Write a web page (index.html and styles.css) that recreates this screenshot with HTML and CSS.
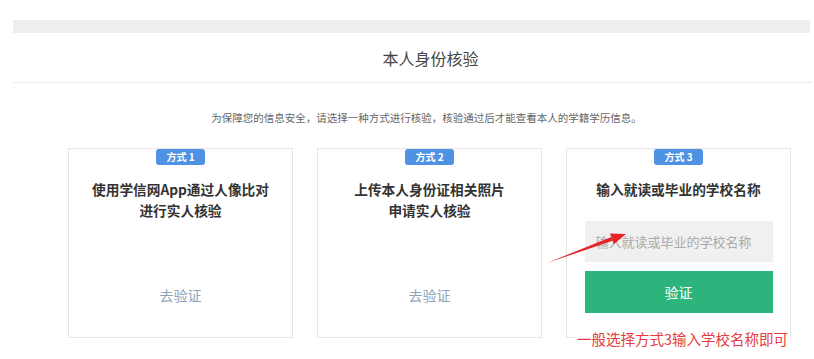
FILE: index.html
```html
<!DOCTYPE html>
<html lang="zh-CN">
<head>
    <meta charset="UTF-8">
    <meta name="viewport" content="width=device-width, initial-scale=1.0">
    <title>本人身份核验</title>
    <link rel="stylesheet" href="styles.css">
</head>
<body>
    <div class="page">
        <div class="top-strip"></div>
        <div class="header">
            <h1 class="header-title">本人身份核验</h1>
        </div>
        <div class="content">
            <p class="tip">为保障您的信息安全，请选择一种方式进行核验，核验通过后才能查看本人的学籍学历信息。</p>
            <div class="cards">
                <div class="card">
                    <span class="badge">方式 1</span>
                    <div class="card-title">使用学信网App通过人像比对<br>进行实人核验</div>
                    <a class="card-link" href="#">去验证</a>
                </div>
                <div class="card">
                    <span class="badge">方式 2</span>
                    <div class="card-title">上传本人身份证相关照片<br>申请实人核验</div>
                    <a class="card-link" href="#">去验证</a>
                </div>
                <div class="card card-school">
                    <span class="badge">方式 3</span>
                    <div class="card-title">输入就读或毕业的学校名称</div>
                    <input class="school-input" type="text" placeholder="输入就读或毕业的学校名称">
                    <button class="verify-btn" type="button">验证</button>
                    <!-- annotation on the screenshot -->
                    <span class="note">一般选择方式3输入学校名称即可</span>
                </div>
            </div>
        </div>
        <svg class="arrow" width="814" height="359" viewBox="0 0 814 359">
            <polygon points="547,263 612.6,240.8 611.2,237.0" fill="#e4262b"/>
            <polygon points="626,234 613.8,244.2 610.0,233.6" fill="#e4262b"/>
        </svg>
    </div>
</body>
</html>
```

FILE: styles.css
```css
body {
    margin: 0;
    background-color: #fff;
    font-family: "Noto Sans CJK SC", "Noto Sans", sans-serif;
    color: #333;
}

.page {
    position: relative;
    width: 814px;
    height: 359px;
    overflow: hidden;
}

.top-strip {
    margin: 20px 4px 0 13px;
    height: 13px;
    background-color: #eeeeee;
}

.header {
    margin-left: 13px;
    margin-right: 2px;
    height: 49px;
    border-bottom: 1px solid #ececec;
    display: flex;
    align-items: center;
    justify-content: center;
    padding-left: 36px;
}

.header-title {
    margin: 0;
    font-size: 16px;
    font-weight: 400;
    color: #444;
    line-height: 20px;
}

.content {
    margin-left: 49px;
    width: 761px;
}

.tip {
    margin: 27px 0 0;
    text-align: center;
    font-size: 10.5px;
    line-height: 16px;
    color: #666;
    padding-right: 6px;
}

.cards {
    display: flex;
    justify-content: center;
    gap: 24px;
    margin-top: 22px;
}

.card {
    position: relative;
    width: 225px;
    height: 190px;
    box-sizing: border-box;
    border: 1px solid #e6e6e6;
    display: flex;
    flex-direction: column;
    align-items: center;
    padding-bottom: 32px;
}

.badge {
    display: inline-block;
    width: 49px;
    height: 16px;
    line-height: 16px;
    text-align: center;
    background-color: #4f92e3;
    color: #fff;
    font-size: 10px;
    font-weight: 700;
    border-radius: 3px;
}

.card-title {
    margin-top: 14px;
    font-size: 13.7px;
    font-weight: 700;
    line-height: 21px;
    text-align: center;
    color: #333;
}

.card-link {
    margin-top: auto;
    font-size: 14px;
    line-height: 20px;
    color: #8da2b8;
    text-decoration: none;
}

.card-school {
    padding: 0 18px 0 18px;
}

.school-input {
    margin-top: 21px;
    width: 188px;
    height: 41px;
    box-sizing: border-box;
    border: none;
    background-color: #f0f0f0;
    padding: 0 11px;
    font-family: inherit;
    font-size: 13px;
    color: #333;
    outline: none;
}

.school-input::placeholder {
    color: #aaa;
}

.verify-btn {
    margin-top: 9px;
    width: 188px;
    height: 42px;
    border: none;
    background-color: #2db47c;
    color: #fff;
    font-family: inherit;
    font-size: 14px;
    cursor: pointer;
}

.note {
    position: absolute;
    left: 8px;
    top: 181px;
    padding: 0 2px;
    background-color: #fff;
    color: #e63a3f;
    font-size: 14.5px;
    line-height: 18px;
    white-space: nowrap;
}

.arrow {
    position: absolute;
    left: 0;
    top: 0;
    pointer-events: none;
}
```
